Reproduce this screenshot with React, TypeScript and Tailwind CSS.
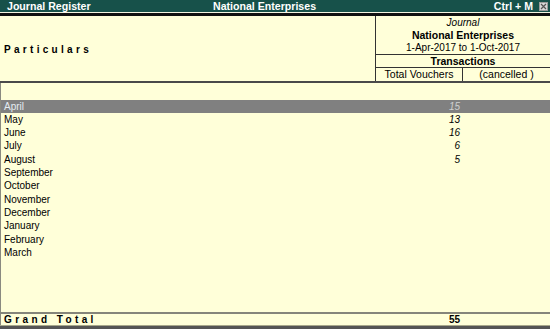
import React from "react";

const months: [string, string][] = [
  ["April", "15"],
  ["May", "13"],
  ["June", "16"],
  ["July", "6"],
  ["August", "5"],
  ["September", ""],
  ["October", ""],
  ["November", ""],
  ["December", ""],
  ["January", ""],
  ["February", ""],
  ["March", ""],
];

export default function App() {
  return (
    <div
      className="w-[550px] h-[329px] flex flex-col bg-[#ffffd9] text-black overflow-hidden"
      style={{ fontFamily: '"Liberation Sans", Arial, sans-serif' }}
    >
      {/* Title bar */}
      <div className="h-[12px] bg-[#17514a] flex items-center text-white font-bold text-[10.6px] leading-[12px]">
        <div className="w-[213px] pl-[7px]">Journal Register</div>
        <div className="flex-1">National Enterprises</div>
        <div className="pr-[6px]">Ctrl + M</div>
        <div className="w-[9px] h-[9px] mr-[2px] bg-[#d8d8d8] border border-[#9a9a9a] flex items-center justify-center">
          <svg width="7" height="7" viewBox="0 0 7 7">
            <path d="M1 1 L6 6 M6 1 L1 6" stroke="#555" strokeWidth="1.2" />
          </svg>
        </div>
      </div>
      <div className="h-[1px] bg-[#f4f4e0]" />
      <div className="h-[3px] bg-[#111]" />

      {/* Header */}
      <div className="h-[65px] flex text-[10px]">
        <div className="w-[375px] flex items-center pl-[4px] pt-[1px] font-bold tracking-[3.3px]">
          Particulars
        </div>
        <div className="flex-1 border-l border-[#333] flex flex-col">
          <div className="h-[13px] leading-[13px] text-center italic">Journal</div>
          <div className="h-[13px] leading-[13px] text-center font-bold text-[10.5px]">
            National Enterprises
          </div>
          <div className="h-[12px] leading-[12px] text-center border-b border-[#333] box-content">
            1-Apr-2017 to 1-Oct-2017
          </div>
          <div className="h-[12px] leading-[12px] text-center font-bold text-[10.5px] border-b border-[#333] box-content">
            Transactions
          </div>
          <div className="h-[13px] leading-[13px] flex text-[10.5px]">
            <div className="w-[87px] text-center border-r border-[#333]">Total Vouchers</div>
            <div className="flex-1 text-center">(cancelled )</div>
          </div>
        </div>
      </div>
      <div className="h-[2px] bg-[#4a4a4a]" />

      {/* Body */}
      <div className="flex-1 border-l border-[#8a8a80] pt-[16.5px] text-[10px]">
        {months.map(([m, v], i) => (
          <div
            key={m}
            className={
              "h-[13.33px] leading-[13.33px] flex " +
              (i === 0 ? "bg-[#808080] text-[#e4ecf2]" : "")
            }
          >
            <div className="w-[374px] pl-[3px]">{m}</div>
            <div
              className={
                "w-[88px] pr-[3px] text-right italic " +
                (i === 0 ? "text-[#d0d0d0]" : "")
              }
            >
              {v}
            </div>
          </div>
        ))}
      </div>
      <div className="h-[2px] bg-[#85857a]" />

      {/* Grand total */}
      <div className="h-[11px] leading-[11px] flex text-[10px] font-bold border-l border-[#8a8a80]">
        <div className="w-[374px] pl-[3px] tracking-[3.4px]">Grand Total</div>
        <div className="w-[88px] pr-[3px] text-right">55</div>
      </div>
      <div className="h-[1px] bg-[#a7a78a]" />
      <div className="h-[3px] bg-[#555555]" />
    </div>
  );
}
